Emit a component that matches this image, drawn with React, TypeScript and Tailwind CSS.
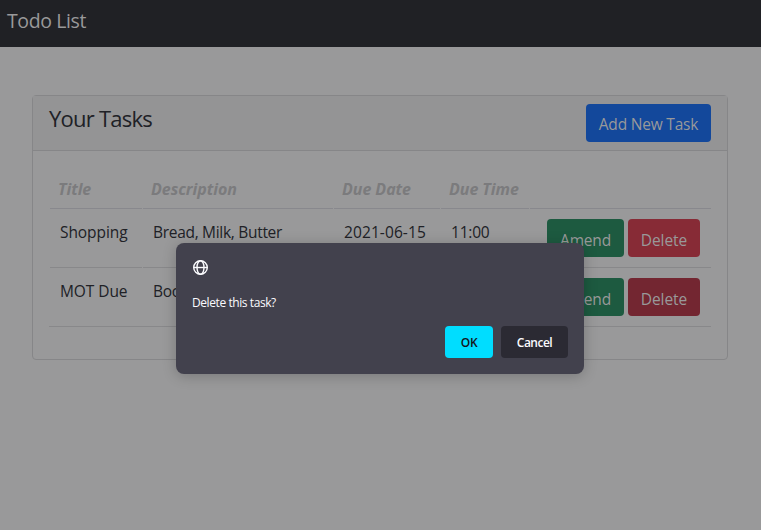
import React from "react";

const headings = ["Title", "Description", "Due Date", "Due Time", ""];

const tasks = [
  { title: "Shopping", description: "Bread, Milk, Butter", date: "2021-06-15", time: "11:00", active: false },
  { title: "MOT Due", description: "Book", date: "", time: "", active: true },
];

const columns = "grid grid-cols-[92px_190px_106px_88px_181px] gap-x-px";

function Navbar() {
  return (
    <nav className="h-[47px] bg-[#202125] pl-[7px] pt-[6px] text-[19.5px] leading-[30px] text-[#99999a]">
      <span className="tracking-[-0.4px]">Todo List</span>
    </nav>
  );
}

function TaskTable() {
  return (
    <div className="ml-[17px] w-[661px]">
      <div className={`${columns} h-[58px]`}>
        {headings.map((label, i) => (
          <div key={i} className="border-b border-[#88888d] pl-2 pt-[26px] text-[16px] font-bold italic leading-6 tracking-[-0.05px] text-[#7b7b7d]">
            {label}
          </div>
        ))}
      </div>
      {tasks.map((t) => (
        <div key={t.title} className={`${columns} h-[59px] text-[15.5px] leading-6 text-[#202126] *:border-b *:border-[#88888a] *:pt-[11px] *:whitespace-nowrap`}>
          <div className="pl-[10px] tracking-[-0.08px]">{t.title}</div>
          <div className="pl-[10px] tracking-[-0.3px]">{t.description}</div>
          <div className="pl-[10px] tracking-[0.1px]">{t.date}</div>
          <div className="pl-[10px] tracking-[-0.2px]">{t.time}</div>
          <div className="flex gap-1 pl-[17px] text-[#99999a]">
            <button className="-mt-px flex h-[38px] w-[77px] items-center justify-center rounded bg-[#1d5a40] pt-[3px] tracking-[-0.2px]">Amend</button>
            <button className={`-mt-px flex h-[38px] w-[72px] items-center justify-center rounded pt-[3px] tracking-[-0.05px] ${t.active ? "bg-[#732631]" : "bg-[#872b36]"}`}>Delete</button>
          </div>
        </div>
      ))}
    </div>
  );
}

function ConfirmDialog() {
  return (
    <div role="dialog" className="absolute left-[176px] top-[243px] flex h-[131px] w-[408px] flex-col rounded-lg bg-[#42414d] p-4 text-[12px] text-[#fbfbfe] shadow-[0_2px_14px_rgba(0,0,0,0.22)]">
      <svg className="ml-px mt-px size-[15px] shrink-0" viewBox="0 0 15 15" fill="none" stroke="currentColor" strokeWidth="1.4">
        <circle cx="7.5" cy="7.5" r="6.8" />
        <ellipse cx="7.5" cy="7.5" rx="3.5" ry="6.8" />
        <path d="M.7 7.5h13.6" />
      </svg>
      <p className="mt-5 h-4 leading-4 tracking-[-0.42px]">Delete this task?</p>
      <div className="mt-[15px] flex justify-end gap-2">
        <button className="h-8 w-12 rounded bg-[#00ddff] pt-px font-semibold tracking-[-0.4px] text-[#15141a]">OK</button>
        <button className="h-8 w-[67px] rounded bg-[#2b2a33] pt-px font-semibold tracking-[-0.5px]">Cancel</button>
      </div>
    </div>
  );
}

export default function App() {
  return (
    <div className="relative h-[530px] w-[761px] overflow-hidden bg-[#99999a] font-['Open_Sans','Noto_Sans',sans-serif]">
      <Navbar />
      <main className="px-8 pt-12">
        <section className="h-[265px] w-[696px] rounded border border-[#868688]">
          <header className="flex h-[55px] justify-between border-b border-[#868688] bg-[#949495] pl-4 pr-4 pt-2">
            <h1 className="-mt-px text-[22px] leading-[30px] tracking-[-0.75px] text-[#202126]">Your Tasks</h1>
            <button className="flex h-[38px] w-[125px] items-center justify-center rounded bg-[#13489b] pt-1 text-[15.5px] tracking-[-0.2px] text-[#99999a]">Add New Task</button>
          </header>
          <TaskTable />
          <div className="-mt-px ml-4 h-px w-[662px] bg-[#88888a]" />
        </section>
      </main>
      <ConfirmDialog />
    </div>
  );
}
